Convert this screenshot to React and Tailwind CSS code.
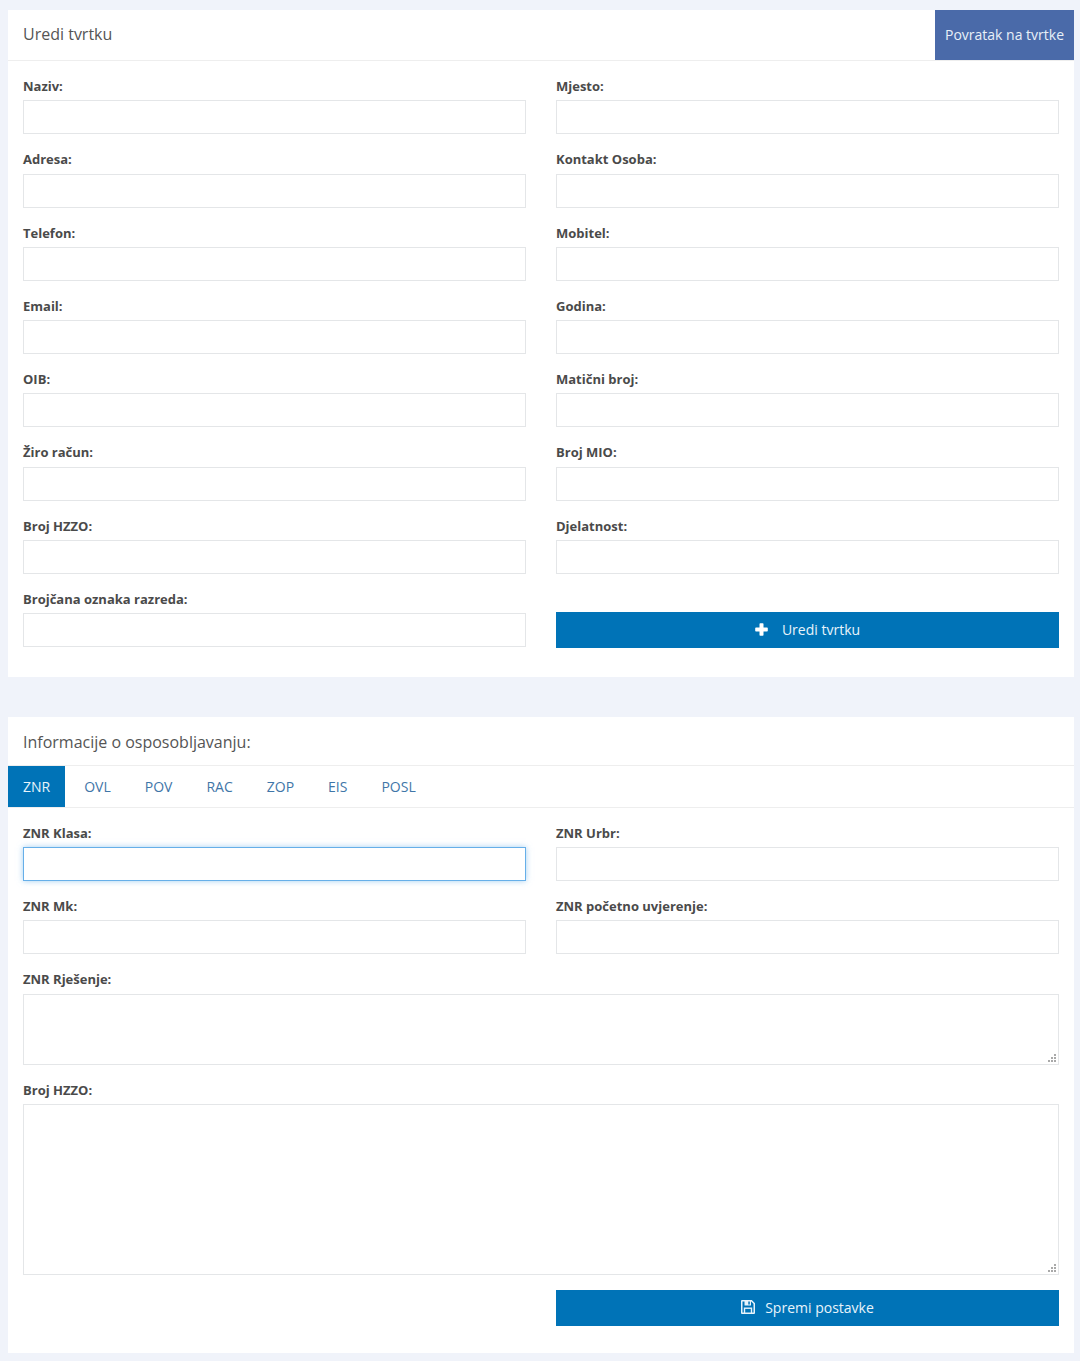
const companyFields = [
  'Naziv:', 'Mjesto:',
  'Adresa:', 'Kontakt Osoba:',
  'Telefon:', 'Mobitel:',
  'Email:', 'Godina:',
  'OIB:', 'Matični broj:',
  'Žiro račun:', 'Broj MIO:',
  'Broj HZZO:', 'Djelatnost:',
  'Brojčana oznaka razreda:',
];

const tabs = ['ZNR', 'OVL', 'POV', 'RAC', 'ZOP', 'EIS', 'POSL'];

function PlusIcon() {
  return (
    <svg width="13" height="13" viewBox="0 0 13 13" className="fill-white">
      <path d="M4.5 1a.8.8 0 0 1 .8-.8h2.4a.8.8 0 0 1 .8.8v3.5H12a.8.8 0 0 1 .8.8v2.4a.8.8 0 0 1-.8.8H8.5V12a.8.8 0 0 1-.8.8H5.300a.8.8 0 0 1-.8-.8V8.500H1a.8.8 0 0 1-.8-.8V5.300a.8.8 0 0 1 .8-.8h3.500z" />
    </svg>
  );
}

function SaveIcon() {
  return (
    <svg width="14" height="14" viewBox="0 0 14 14">
      <path
        className="fill-[#e8f4fb]"
        fillRule="evenodd"
        d="M1 0h9.800L14 3.200V13a1 1 0 0 1-1 1H1a1 1 0 0 1-1-1V1a1 1 0 0 1 1-1zM1.500 1.500v11h11V3.800L10.200 1.500z"
      />
      <path className="fill-[#e8f4fb]" d="M3.500 0.500h6.500v5H3.500z" />
      <path className="fill-[#0073b7]" d="M7.300 1.400h1.500v3.200H7.300z" />
      <path className="fill-[#e8f4fb]" d="M2.800 7.500h8.400v5.500H2.800z" />
      <path className="fill-[#0073b7]" d="M4.200 8.900h5.600v3.600H4.200z" />
    </svg>
  );
}

function ResizeGrip() {
  return (
    <svg width="8" height="8" viewBox="0 0 8 8" className="absolute right-[3px] bottom-[3px] fill-[#a9a9a9]">
      <rect x="6" y="0" width="2" height="2" />
      <rect x="3" y="3" width="2" height="2" />
      <rect x="6" y="3" width="2" height="2" />
      <rect x="0" y="6" width="2" height="2" />
      <rect x="3" y="6" width="2" height="2" />
      <rect x="6" y="6" width="2" height="2" />
    </svg>
  );
}

function Field({ label, focused }) {
  return (
    <div>
      <label className="block h-[19px] mb-[5.3px] text-[13px] leading-[20px] font-bold text-[#4a4a4a]">{label}</label>
      <input
        type="text"
        className={
          focused
            ? 'block w-full h-[34px] bg-white border border-[#66afe9] outline-none shadow-[0_0_6px_rgba(102,175,233,0.6)]'
            : 'block w-full h-[34px] bg-white border border-[#e4e6e8] outline-none'
        }
      />
    </div>
  );
}

function SubmitButton({ icon, text, iconGap }) {
  return (
    <button type="button" className={`flex items-center justify-center w-full h-9 pb-0.5 bg-[#0073b7] text-[14px] text-[#e8f4fb] ${iconGap}`}>
      {icon}
      {text}
    </button>
  );
}

export default function App() {
  return (
    <div className="min-h-[1361px] bg-[#f0f3fa] px-2 pt-2.5 pb-2 font-['Open_Sans',sans-serif] text-[#4a4a4a]">
      <section className="w-[1066px] h-[667px] bg-white">
        <div className="flex justify-between h-[51px] border-b border-[#eeeeee]">
          <h2 className="pl-[15px] text-[16px] leading-[48px] text-[#555555]">Uredi tvrtku</h2>
          <a className="h-[50px] px-2.5 bg-[#4a6aa9] text-[14px] leading-[50px] text-[#e8f0f8]">Povratak na tvrtke</a>
        </div>
        <div className="grid grid-cols-2 gap-x-[30px] gap-y-[14.96px] px-[15px] pt-[15.05px]">
          {companyFields.map((label) => (
            <Field key={label} label={label} />
          ))}
          <div className="pt-[23.3px]">
            <SubmitButton icon={<PlusIcon />} text="Uredi tvrtku" iconGap="gap-[14px]" />
          </div>
        </div>
      </section>

      <section className="w-[1066px] h-[636px] mt-10 bg-white">
        <h2 className="h-[49px] pl-[15px] border-b border-[#eeeeee] text-[16px] leading-[50px] text-[#555555]">
          Informacije o osposobljavanju:
        </h2>
        <div className="flex gap-1 h-[42px] border-b border-[#eeeeee]">
          {tabs.map((tab, i) => (
            <a
              key={tab}
              className={
                i === 0
                  ? 'h-[41px] px-[15px] bg-[#0073b7] text-[14px] leading-[41px] text-[#e8f4fb]'
                  : 'h-[41px] px-[15px] text-[14px] leading-[41px] text-[#3f76a8]'
              }
            >
              {tab}
            </a>
          ))}
        </div>
        <div className="px-[15px] pt-[15px]">
          <div className="grid grid-cols-2 gap-x-[30px] gap-y-[14.7px]">
            <Field label="ZNR Klasa:" focused />
            <Field label="ZNR Urbr:" />
            <Field label="ZNR Mk:" />
            <Field label="ZNR početno uvjerenje:" />
          </div>
          <label className="block h-[19px] mt-[14.7px] mb-[6px] text-[13px] leading-[20px] font-bold text-[#4a4a4a]">ZNR Rješenje:</label>
          <div className="relative">
            <textarea className="block w-full h-[71px] border border-[#e4e6e8] outline-none resize-none" />
            <ResizeGrip />
          </div>
          <label className="block h-[19px] mt-[15px] mb-[5px] text-[13px] leading-[20px] font-bold text-[#4a4a4a]">Broj HZZO:</label>
          <div className="relative">
            <textarea className="block w-full h-[171px] border border-[#e4e6e8] outline-none resize-none" />
            <ResizeGrip />
          </div>
          <div className="grid grid-cols-2 gap-x-[30px] mt-[15.1px]">
            <div className="col-start-2">
              <SubmitButton icon={<SaveIcon />} text="Spremi postavke" iconGap="gap-[10px]" />
            </div>
          </div>
        </div>
      </section>
    </div>
  );
}
